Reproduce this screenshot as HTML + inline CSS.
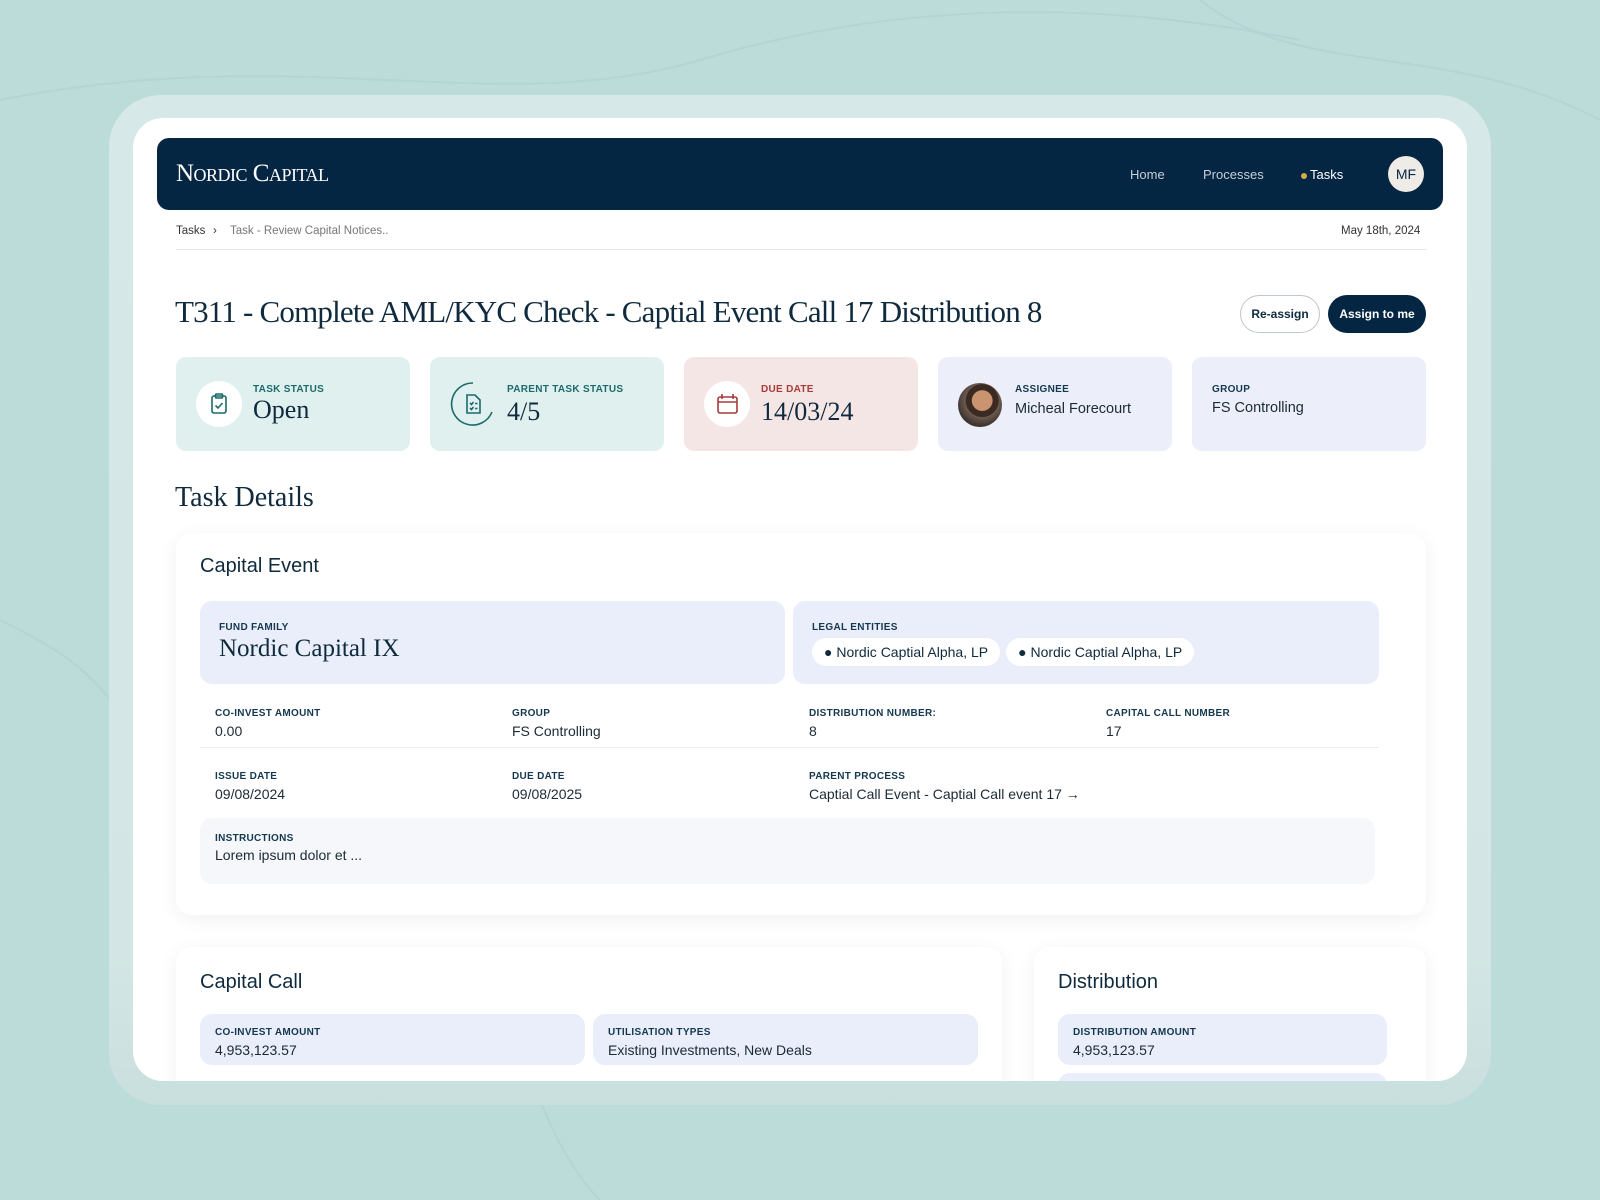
<!DOCTYPE html>
<html><head><meta charset="utf-8"><style>
*{box-sizing:border-box;margin:0;padding:0}
body{width:1600px;height:1200px;overflow:hidden;background:#bcdcda;font-family:"Liberation Sans",sans-serif;color:#0f2a3d;position:relative}
.abs{position:absolute}
.frame{left:109px;top:95px;width:1382px;height:1010px;border-radius:52px;background:linear-gradient(#d6e8e8,#d3e6e5 85%,#c9dfde)}
.inner{left:133px;top:118px;width:1334px;height:963px;border-radius:30px;background:#fff;overflow:hidden}
.nav{left:24px;top:20px;width:1286px;height:72px;border-radius:12px;background:#052642}
.logo{left:19px;top:22px;font-family:"Liberation Serif",serif;color:#fff;font-size:25px;letter-spacing:-0.5px;font-variant:small-caps}
.navl{top:29px;color:#c5cfd8;font-size:13px}
.av{left:1231px;top:18px;width:36px;height:36px;border-radius:50%;background:#efebe6;color:#052642;font-size:14px;text-align:center;line-height:36px}
.crumb{top:107px;font-size:11.5px;color:#555}
.serif{font-family:"Liberation Serif",serif}
.btn{height:38px;border-radius:19px;font-size:12px;font-weight:bold;text-align:center;line-height:36px}
.stat{top:239px;width:234px;height:94px;border-radius:10px}
.ic{left:20px;top:24px;width:46px;height:46px;border-radius:50%;background:#fff}
.lab{font-size:10px;font-weight:bold;letter-spacing:.3px;color:#14384f}
.card{background:#fff;border-radius:16px;box-shadow:0 4px 20px rgba(0,0,0,0.06)}
.box{background:#e9eefa;border-radius:12px}
.val{font-size:14px;color:#1b2a36}
.pill{display:inline-block;background:#fff;border-radius:14px;height:28px;line-height:28px;padding:0 12px;font-size:14px;margin-right:6px}
</style></head><body>
<svg class="abs" style="left:0;top:0" width="1600" height="1200"><g fill="none" stroke="#b0d2d0" stroke-width="2" opacity=".7"><path d="M0 100 C300 40 500 120 700 60 S1100 0 1300 40"/><path d="M1200 0 C1300 80 1450 40 1600 120"/><path d="M540 1100 C560 1150 580 1180 600 1200"/><path d="M0 620 C40 640 80 660 110 700"/></g></svg>
<div class="abs frame"></div>
<div class="abs inner">
 <div class="abs nav">
  <div class="abs logo">Nordic Capital</div>
  <div class="abs navl" style="left:973px">Home</div>
  <div class="abs navl" style="left:1046px">Processes</div>
  <div class="abs" style="left:1144px;top:35px;width:6px;height:6px;border-radius:50%;background:#d6a94a"></div>
  <div class="abs navl" style="left:1153px;color:#fff">Tasks</div>
  <div class="abs av">MF</div>
 </div>
 <div class="abs crumb" style="left:43px;color:#333">Tasks</div>
 <div class="abs crumb" style="left:80px;color:#333">›</div>
 <div class="abs crumb" style="left:97px;color:#777">Task - Review Capital Notices..</div>
 <div class="abs crumb" style="left:1208px;color:#333">May 18th, 2024</div>
 <div class="abs" style="left:43px;top:131px;width:1250px;height:1px;background:#e4e6e8"></div>
 <div class="abs serif" style="left:42px;top:176px;font-size:31px;color:#0f2a3d;letter-spacing:-0.8px">T311 - Complete AML/KYC Check - Captial Event Call 17 Distribution 8</div>
 <div class="abs btn" style="left:1107px;top:177px;width:80px;border:1px solid #bfc6cc;color:#0f2a3d">Re-assign</div>
 <div class="abs btn" style="left:1195px;top:177px;width:98px;background:#052642;color:#fff;line-height:38px">Assign to me</div>

 <div class="abs stat" style="left:43px;background:#e0f0ef">
  <div class="abs ic"><svg width="46" height="46" viewBox="0 0 46 46" fill="none" stroke="#1c6a6c" stroke-width="1.6"><rect x="16" y="15" width="14" height="17" rx="2"/><rect x="19.5" y="13" width="7" height="4" rx="1"/><path d="M19.5 24.5l2.5 2.5 4.5-5"/></svg></div>
  <div class="abs lab" style="left:77px;top:27px;color:#1c6a6c">TASK STATUS</div>
  <div class="abs serif" style="left:77px;top:38px;font-size:26px">Open</div>
 </div>
 <div class="abs stat" style="left:297px;background:#e0f0ef">
  <div class="abs ic" style="background:none"><svg width="46" height="46" viewBox="0 0 46 46" fill="none" stroke="#1c6a6c" stroke-width="1.6"><path d="M23 2A21 21 0 1 0 42 31" /><path d="M17 14h8l5 5v13h-13z"/><path d="M20 22l1.5 1.5 2-2.5M25 22.5h2.5M20 27l1.5 1.5 2-2.5M25 27.5h2.5"/></svg></div>
  <div class="abs lab" style="left:77px;top:27px;color:#1c6a6c">PARENT TASK STATUS</div>
  <div class="abs serif" style="left:77px;top:40px;font-size:26px">4/5</div>
 </div>
 <div class="abs stat" style="left:551px;background:#f5e6e6">
  <div class="abs ic"><svg width="46" height="46" viewBox="0 0 46 46" fill="none" stroke="#a83a3a" stroke-width="1.6"><rect x="14" y="16" width="19" height="16" rx="2"/><path d="M14 21h19M18 13v5M29 13v5"/></svg></div>
  <div class="abs lab" style="left:77px;top:27px;color:#a83a3a">DUE DATE</div>
  <div class="abs serif" style="left:77px;top:40px;font-size:26px">14/03/24</div>
 </div>
 <div class="abs stat" style="left:805px;background:#eceff9">
  <div class="abs" style="left:20px;top:26px;width:44px;height:44px;border-radius:50%;background:radial-gradient(circle at 55% 40%,#c9946f 0 28%,#3b2a22 30% 45%,#6b5a4e 47%,#2b2624 80%)"></div>
  <div class="abs lab" style="left:77px;top:27px">ASSIGNEE</div>
  <div class="abs val" style="left:77px;top:44px;font-size:14.5px">Micheal Forecourt</div>
 </div>
 <div class="abs stat" style="left:1059px;background:#eceff9">
  <div class="abs lab" style="left:20px;top:27px">GROUP</div>
  <div class="abs val" style="left:20px;top:43px;font-size:14.5px">FS Controlling</div>
 </div>

 <div class="abs serif" style="left:42px;top:364px;font-size:28px">Task Details</div>

 <div class="abs card" style="left:43px;top:415px;width:1250px;height:382px">
  <div class="abs" style="left:24px;top:22px;font-size:20px">Capital Event</div>
  <div class="abs box" style="left:24px;top:68px;width:585px;height:83px">
   <div class="abs lab" style="left:19px;top:21px">FUND FAMILY</div>
   <div class="abs serif" style="left:19px;top:34px;font-size:25px">Nordic Capital IX</div>
  </div>
  <div class="abs box" style="left:617px;top:68px;width:586px;height:83px">
   <div class="abs lab" style="left:19px;top:21px">LEGAL ENTITIES</div>
   <div class="abs" style="left:19px;top:37px"><span class="pill">● Nordic Captial Alpha, LP</span><span class="pill">● Nordic Captial Alpha, LP</span></div>
  </div>
  <div class="abs lab" style="left:39px;top:175px">CO-INVEST AMOUNT</div><div class="abs val" style="left:39px;top:190px">0.00</div>
  <div class="abs lab" style="left:336px;top:175px">GROUP</div><div class="abs val" style="left:336px;top:190px">FS Controlling</div>
  <div class="abs lab" style="left:633px;top:175px">DISTRIBUTION NUMBER:</div><div class="abs val" style="left:633px;top:190px">8</div>
  <div class="abs lab" style="left:930px;top:175px">CAPITAL CALL NUMBER</div><div class="abs val" style="left:930px;top:190px">17</div>
  <div class="abs" style="left:24px;top:214px;width:1179px;height:1px;background:#eceef0"></div>
  <div class="abs lab" style="left:39px;top:238px">ISSUE DATE</div><div class="abs val" style="left:39px;top:253px">09/08/2024</div>
  <div class="abs lab" style="left:336px;top:238px">DUE DATE</div><div class="abs val" style="left:336px;top:253px">09/08/2025</div>
  <div class="abs lab" style="left:633px;top:238px">PARENT PROCESS</div><div class="abs val" style="left:633px;top:253px">Captial Call Event - Captial Call event 17 →</div>
  <div class="abs" style="left:24px;top:285px;width:1175px;height:66px;border-radius:12px;background:#f5f7fa">
   <div class="abs lab" style="left:15px;top:15px">INSTRUCTIONS</div>
   <div class="abs val" style="left:15px;top:29px">Lorem ipsum dolor et ...</div>
  </div>
 </div>

 <div class="abs card" style="left:43px;top:829px;width:826px;height:200px">
  <div class="abs" style="left:24px;top:24px;font-size:20px">Capital Call</div>
  <div class="abs box" style="left:24px;top:67px;width:385px;height:51px">
   <div class="abs lab" style="left:15px;top:13px">CO-INVEST AMOUNT</div><div class="abs val" style="left:15px;top:28px">4,953,123.57</div>
  </div>
  <div class="abs box" style="left:417px;top:67px;width:385px;height:51px">
   <div class="abs lab" style="left:15px;top:13px">UTILISATION TYPES</div><div class="abs val" style="left:15px;top:28px">Existing Investments, New Deals</div>
  </div>
 </div>
 <div class="abs card" style="left:901px;top:829px;width:392px;height:200px">
  <div class="abs" style="left:24px;top:24px;font-size:20px">Distribution</div>
  <div class="abs box" style="left:24px;top:67px;width:329px;height:51px">
   <div class="abs lab" style="left:15px;top:13px">DISTRIBUTION AMOUNT</div><div class="abs val" style="left:15px;top:28px">4,953,123.57</div>
  </div>
  <div class="abs box" style="left:24px;top:126px;width:329px;height:51px"></div>
 </div>
</div>
</body></html>
